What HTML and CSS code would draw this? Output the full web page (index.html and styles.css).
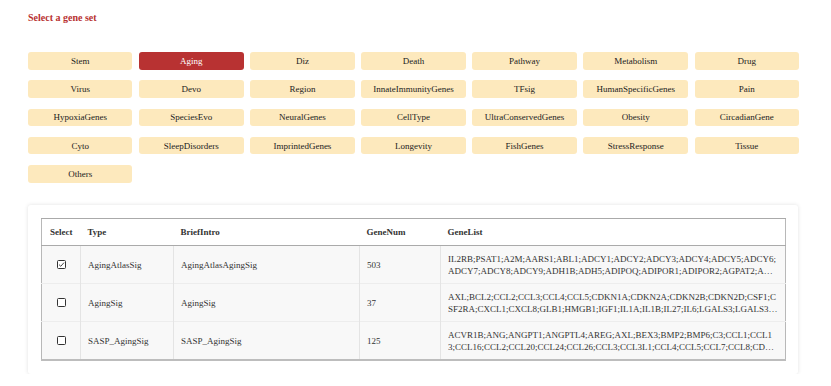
FILE: index.html
```html
<!DOCTYPE html>
<html lang="en">
<head>
    <meta charset="UTF-8">
    <meta name="viewport" content="width=device-width, initial-scale=1.0">
    <title>Gene Set Selection</title>
    <link rel="stylesheet" href="styles.css">
</head>
<body>
    <div class="container">
        <h1 class="title">Select a gene set</h1>

        <div class="set-grid">
            <button class="set-btn">Stem</button>
            <button class="set-btn active">Aging</button>
            <button class="set-btn">Diz</button>
            <button class="set-btn">Death</button>
            <button class="set-btn">Pathway</button>
            <button class="set-btn">Metabolism</button>
            <button class="set-btn">Drug</button>
            <button class="set-btn">Virus</button>
            <button class="set-btn">Devo</button>
            <button class="set-btn">Region</button>
            <button class="set-btn">InnateImmunityGenes</button>
            <button class="set-btn">TFsig</button>
            <button class="set-btn">HumanSpecificGenes</button>
            <button class="set-btn">Pain</button>
            <button class="set-btn">HypoxiaGenes</button>
            <button class="set-btn">SpeciesEvo</button>
            <button class="set-btn">NeuralGenes</button>
            <button class="set-btn">CellType</button>
            <button class="set-btn">UltraConservedGenes</button>
            <button class="set-btn">Obesity</button>
            <button class="set-btn">CircadianGene</button>
            <button class="set-btn">Cyto</button>
            <button class="set-btn">SleepDisorders</button>
            <button class="set-btn">ImprintedGenes</button>
            <button class="set-btn">Longevity</button>
            <button class="set-btn">FishGenes</button>
            <button class="set-btn">StressResponse</button>
            <button class="set-btn">Tissue</button>
            <button class="set-btn">Others</button>
        </div>

        <div class="card">
            <table class="gene-table">
                <colgroup>
                    <col class="col-select">
                    <col class="col-type">
                    <col class="col-brief">
                    <col class="col-num">
                    <col>
                </colgroup>
                <thead>
                    <tr>
                        <th class="center">Select</th>
                        <th>Type</th>
                        <th>BriefIntro</th>
                        <th>GeneNum</th>
                        <th>GeneList</th>
                    </tr>
                </thead>
                <tbody>
                    <tr>
                        <td class="center">
                            <svg class="check" width="9" height="9" viewBox="0 0 9 9"><rect x="0.5" y="0.5" width="8" height="8" rx="1" fill="#fff" stroke="#333"/><path d="M2 4.6 L3.8 6.3 L7 2.6" fill="none" stroke="#333" stroke-width="0.9"/></svg>
                        </td>
                        <td>AgingAtlasSig</td>
                        <td>AgingAtlasAgingSig</td>
                        <td>503</td>
                        <td><div class="gene-list">IL2RB;PSAT1;A2M;AARS1;ABL1;ADCY1;ADCY2;ADCY3;ADCY4;ADCY5;ADCY6;ADCY7;ADCY8;ADCY9;ADH1B;ADH5;ADIPOQ;ADIPOR1;ADIPOR2;AGPAT2;AGT;AKT1;AKT2;ALB;ALDH2;AMPK;APOE;APP;AR;ATM;ATR;BAX;BCL2;BDNF</div></td>
                    </tr>
                    <tr>
                        <td class="center">
                            <svg class="check" width="9" height="9" viewBox="0 0 9 9"><rect x="0.5" y="0.5" width="8" height="8" rx="1" fill="#fff" stroke="#333"/></svg>
                        </td>
                        <td>AgingSig</td>
                        <td>AgingSig</td>
                        <td>37</td>
                        <td><div class="gene-list">AXL;BCL2;CCL2;CCL3;CCL4;CCL5;CDKN1A;CDKN2A;CDKN2B;CDKN2D;CSF1;CSF2RA;CXCL1;CXCL8;GLB1;HMGB1;IGF1;IL1A;IL1B;IL27;IL6;LGALS3;LGALS3BP;MMP1;MMP3;SERPINE1;TNF</div></td>
                    </tr>
                    <tr>
                        <td class="center">
                            <svg class="check" width="9" height="9" viewBox="0 0 9 9"><rect x="0.5" y="0.5" width="8" height="8" rx="1" fill="#fff" stroke="#333"/></svg>
                        </td>
                        <td>SASP_AgingSig</td>
                        <td>SASP_AgingSig</td>
                        <td>125</td>
                        <td><div class="gene-list">ACVR1B;ANG;ANGPT1;ANGPTL4;AREG;AXL;BEX3;BMP2;BMP6;C3;CCL1;CCL13;CCL16;CCL2;CCL20;CCL24;CCL26;CCL3;CCL3L1;CCL4;CCL5;CCL7;CCL8;CD55;CD9;CSF1;CSF2;CTSB</div></td>
                    </tr>
                </tbody>
            </table>
        </div>
    </div>
</body>
</html>
```

FILE: styles.css
```css
/* Global Styles */
body {
    font-family: "Liberation Serif", "Times New Roman", serif;
    margin: 0;
    padding: 0;
    background: #fff;
    color: #222;
}
.container {
    width: 771px;
    padding: 12px 0 0 28px;
}
.title {
    margin: 0;
    font-size: 10px;
    line-height: 12px;
    font-weight: bold;
    color: #b83232;
}

/* Gene Set Buttons */
.set-grid {
    display: grid;
    grid-template-columns: repeat(7, 1fr);
    column-gap: 6.7px;
    row-gap: 10.8px;
    margin-top: 28px;
}
.set-btn {
    height: 17.5px;
    padding: 0;
    border: none;
    border-radius: 3px;
    background-color: #fde9bd;
    font-family: inherit;
    font-size: 9px;
    color: #222;
    cursor: pointer;
}
.set-btn.active {
    background-color: #b83232;
    color: #fff;
}

/* Table Card */
.card {
    margin-top: 22.5px;
    width: 770px;
    padding: 13px;
    box-sizing: border-box;
    background: #fff;
    border-radius: 3px;
    box-shadow: 0 0 4px rgba(0, 0, 0, 0.12);
}
.gene-table {
    width: 745px;
    table-layout: fixed;
    border-collapse: collapse;
    font-size: 9px;
    line-height: 12px;
    color: #333;
    border-left: 1px solid #b8b8b8;
    border-right: 1px solid #b8b8b8;
    border-bottom: 2px solid #bdbdbd;
}
.col-select { width: 39px; }
.col-type { width: 93px; }
.col-brief { width: 186px; }
.col-num { width: 81px; }

.gene-table th {
    text-align: left;
    font-weight: bold;
    padding: 7px;
    background: #fff;
    border-top: 1px solid #aaa;
    border-bottom: 1px solid #aaa;
}
.gene-table td {
    padding: 6.5px 7px;
    background: #f8f8f8;
    border-top: 1px solid #ededed;
    border-left: 1px solid #e4e4e4;
    vertical-align: middle;
}
.gene-table td:first-child {
    border-left: none;
}
.gene-table .center {
    text-align: center;
}
.check {
    display: block;
    margin: 0 auto;
}
.gene-list {
    display: -webkit-box;
    -webkit-box-orient: vertical;
    -webkit-line-clamp: 2;
    overflow: hidden;
    word-break: break-all;
}
```
